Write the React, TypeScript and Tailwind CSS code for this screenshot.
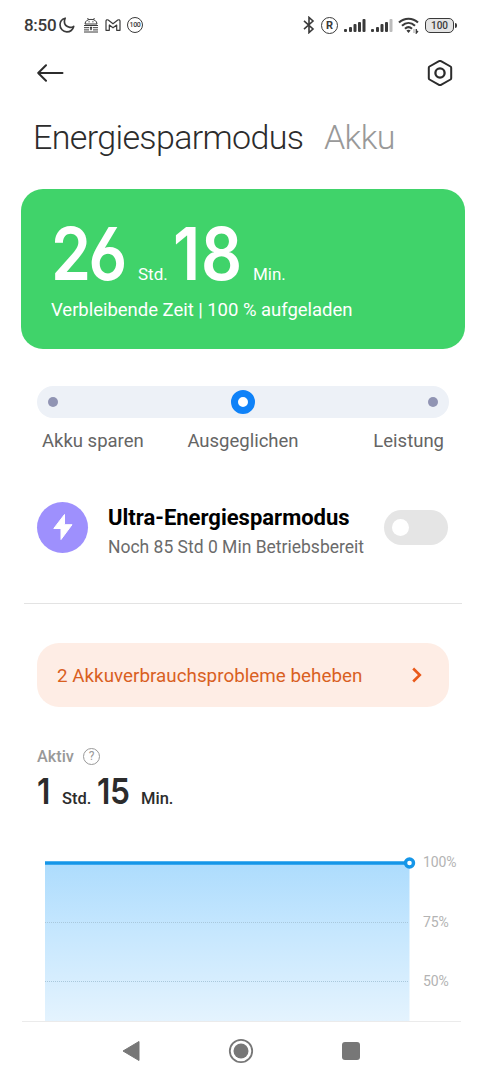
import type { ReactNode } from 'react';

const percentLabels = ['100%', '75%', '50%'];

function StatusBar() {
  return (
    <div className="flex h-[50px] items-center justify-between pl-6 pr-[29px] text-[#3a3a3a]">
      <div className="flex items-center">
        <span className="w-[35px] text-[17px] font-medium leading-5 tracking-[-0.3px]">8:50</span>
        <svg className="h-4 w-4" viewBox="0 0 16 16" fill="none" stroke="currentColor" strokeWidth="1.7" strokeLinejoin="round">
          <path d="M6.200 1.200C3.200 2 1 4.600 1 7.800c0 3.900 3 7 6.800 7 3.200 0 6-2.200 6.900-5.400-1.400.9-2.700 1.200-3.900.9C7.500 9.700 5.400 7.600 5.400 4.800c0-1.300.2-2.500.8-3.600Z" />
        </svg>
        <svg className="ml-2 h-4 w-4" viewBox="0 0 16 16" fill="none" stroke="currentColor" strokeWidth="1">
          <path d="M2 7C2.200 3.800 4.600 2.400 8 2.400S13.800 3.800 14 7ZM4.600 1l1 1.800M11.400 1l-1 1.800M1 8.500h14M1 10.700h5M10 10.700h5M1 12.900h5M10 12.900h5M1 15h14" />
          <path d="M7 10h2v1.200H8.500V13h-1v-1.800H7Z" fill="currentColor" strokeWidth=".4" />
          <path d="M5.500 4.800h1.200M9.300 4.800h1.200" />
        </svg>
        <svg className="ml-[6px] h-4 w-4" viewBox="0 0 16 16" fill="none" stroke="currentColor" strokeWidth="1.2" strokeLinejoin="round">
          <path d="M1 13.300V4.100c0-1.300 1.200-1.700 2.200-1L8 6.800l4.800-3.700c1-.7 2.200-.3 2.200 1v9.200h-3.300V8L8 10.800 4.300 8v5.300Z" />
        </svg>
        <span className="ml-[6px] flex h-4 w-4 items-center justify-center rounded-full border-[1.3px] border-[#3a3a3a] text-[7px] font-medium leading-none tracking-[-0.3px]">
          100
        </span>
      </div>

      <div className="flex items-center">
        <svg className="h-[18px] w-3" viewBox="0 0 12 18" fill="none" stroke="currentColor" strokeWidth="1.6">
          <path d="m1 4.800 9 8.200-4 3.600V1.400L10 5l-9 8.200" />
        </svg>
        <span className="ml-[6px] flex h-[17px] w-[17px] items-center justify-center rounded-full border-[1.600px] border-[#3a3a3a] pt-px text-[11px] font-bold leading-none">
          R
        </span>
        <SignalBars className="ml-[6px]" />
        <SignalBars className="ml-[5px]" weak />
        <svg className="ml-[5px] h-[17px] w-[21px]" viewBox="0 0 21 17" fill="none" stroke="currentColor" strokeWidth="2.100">
          <path d="M1 5.600C6.500.4 14.500.4 20 5.600M4 8.700c3.900-3.600 9.100-3.600 13 0M7 11.700c2.100-2 4.900-2 7 0" />
          <path d="m8.400 13.600 2.100 2.400 2.100-2.400c-1.200-1-3-1-4.200 0Z" fill="currentColor" stroke="none" />
          <path d="M16 12v4" stroke="#b5b5b5" strokeWidth="1.300" />
          <path d="M18.300 12v4l1.700-2" strokeWidth="1.300" />
        </svg>
        <span className="ml-[6px] flex h-[15px] w-[29px] items-center justify-center rounded-[5px] border-[1.500px] border-[#3a3a3a] bg-[#e4e4e4] pt-px text-[10px] font-medium leading-none">
          100
        </span>
        <span className="ml-px h-[5px] w-[2px] rounded-r bg-[#3a3a3a]" />
      </div>
    </div>
  );
}

function SignalBars({ className, weak = false }: { className: string; weak?: boolean }) {
  return (
    <svg className={`h-[15px] w-[22px] ${className}`} viewBox="0 0 22 15" fill="currentColor">
      <rect x="0" y="11" width="3" height="3" rx="1" />
      <rect x="5" y="9" width="3" height="5" rx="1" />
      <rect x="9.500" y="6" width="3" height="8" rx="1" />
      <rect x="14" y="4" width="3" height="10" rx="1" />
      <rect x="18.500" y="1" width="3" height="13" rx="1" fill={weak ? '#bcbcbc' : 'currentColor'} />
    </svg>
  );
}

function Header() {
  return (
    <header className="flex h-[46px] items-center justify-between pl-[37px] pr-[33px] text-[#2c2c2c]">
      <svg className="h-[18px] w-[27px]" viewBox="0 0 27 18" fill="none" stroke="currentColor" strokeWidth="2" strokeLinecap="round" strokeLinejoin="round">
        <path d="M9 1.200 1.200 9 9 16.800M1.200 9H25.500" />
      </svg>
      <svg className="h-[26px] w-[26px]" viewBox="0 0 26 26" fill="none" stroke="currentColor" strokeWidth="2" strokeLinejoin="round">
        <path d="M12 1.200a2 2 0 0 1 2 0l9.500 5.300a1.400 1.400 0 0 1 .7 1.200v10.600a1.400 1.400 0 0 1-.7 1.200L14 24.800a2 2 0 0 1-2 0l-9.500-5.300a1.400 1.400 0 0 1-.7-1.200V7.700a1.400 1.400 0 0 1 .7-1.200Z" />
        <circle cx="13" cy="13" r="4.600" strokeWidth="2.300" />
      </svg>
    </header>
  );
}

function ModeSlider() {
  return (
    <section className="mx-[37px] mt-[37px]">
      <div className="flex h-8 items-center justify-between rounded-full bg-[#edf1f7] px-[11px]">
        <span className="h-[10px] w-[10px] rounded-full bg-[#9094b3]" />
        <span className="h-6 w-6 rounded-full border-[7px] border-[#0f82f8] bg-white" />
        <span className="h-[10px] w-[10px] rounded-full bg-[#9094b3]" />
      </div>
      <div className="mt-[11px] grid grid-cols-3 px-[5px] text-[18.500px] leading-6 text-[#656565]">
        <span>Akku sparen</span>
        <span className="text-center">Ausgeglichen</span>
        <span className="text-right">Leistung</span>
      </div>
    </section>
  );
}

function UltraMode() {
  return (
    <section className="ml-[37px] mr-[38px] mt-[48px] flex h-[52px] items-center">
      <div className="flex h-[51px] w-[51px] shrink-0 items-center justify-center rounded-full bg-[#9e90fd]">
        <svg className="h-[28px] w-[20px]" viewBox="0 0 20 28" fill="#fff" stroke="#fff" strokeWidth="1" strokeLinejoin="round">
          <path d="M11.500 1.500.8 15.500H8v11L19 11.700h-7.500Z" />
        </svg>
      </div>
      <div className="ml-5 w-0 grow whitespace-nowrap pt-[10px]">
        <h2 className="text-[22px] font-bold leading-[30px] text-black">Ultra-Energiesparmodus</h2>
        <p className="text-[17.500px] leading-[28px] text-[#6b6b6b]">Noch 85 Std 0 Min Betriebsbereit</p>
      </div>
      <div className="flex h-[35px] w-16 shrink-0 items-center rounded-full bg-[#e5e5e5] pl-2">
        <span className="h-[17px] w-[17px] rounded-full bg-white" />
      </div>
    </section>
  );
}

// Inter's open digits, condensed a little
function Digits({ className, children }: { className: string; children: ReactNode }) {
  return (
    <span className={`inline-block font-['Inter','Roboto',sans-serif] font-semibold [font-feature-settings:'ss01'] ${className}`}>
      <span className="inline-block origin-left scale-x-[0.88]">{children}</span>
    </span>
  );
}

function BatteryChart() {
  return (
    <section className="ml-[45px] mt-[46px] flex h-[166px] shrink-0 overflow-hidden">
      <svg className="h-[166px] w-[372px] shrink-0" viewBox="0 0 372 166">
        <defs>
          <linearGradient id="level" x1="0" y1="0" x2="0" y2="1">
            <stop offset="0" stopColor="#addcfd" />
            <stop offset=".4" stopColor="#c4e6fe" />
            <stop offset="1" stopColor="#e4f3fe" />
          </linearGradient>
        </defs>
        <rect x="0" y="8" width="364.500" height="158" fill="url(#level)" />
        <path d="M0 67.500H364M0 126.500H364" stroke="#a9c8dc" strokeWidth="1" strokeDasharray="1 1" />
        <path d="M0 8H364" stroke="#1596e8" strokeWidth="3.500" />
        <circle cx="364.500" cy="8" r="4" fill="#fff" stroke="#1596e8" strokeWidth="3.400" />
      </svg>
      <div className="ml-[6px] flex flex-col text-[14px] leading-[15px] tracking-[-0.1px] text-[#b3b3b3]">
        {percentLabels.map((label) => (
          <span key={label} className="h-[59.500px] shrink-0">
            {label}
          </span>
        ))}
      </div>
    </section>
  );
}

function NavBar() {
  return (
    <nav className="h-[59px] shrink-0 text-[#777]">
      <div className="ml-[22px] mr-[25px] h-px bg-[#ebebeb]" />
      <div className="flex h-[58px] items-center justify-between pl-[122px] pr-[126px]">
        <svg className="h-[22px] w-[18px]" viewBox="0 0 18 22" fill="currentColor" stroke="currentColor" strokeLinejoin="round">
          <path d="M1 11 17 1.500v19Z" />
        </svg>
        <svg className="h-[26px] w-[26px]" viewBox="0 0 26 26">
          <circle cx="13" cy="13" r="11.200" fill="none" stroke="currentColor" strokeWidth="1.800" />
          <circle cx="13" cy="13" r="7.500" fill="currentColor" />
        </svg>
        <span className="h-[18px] w-[18px] rounded-[3px] bg-[#777]" />
      </div>
    </nav>
  );
}

export default function App() {
  return (
    <div className="flex h-[1080px] w-[486px] flex-col overflow-hidden bg-white font-['Roboto',sans-serif]">
      <StatusBar />
      <Header />

      <div className="flex h-[93px] items-start whitespace-nowrap pl-[33px] pt-[21px] text-[34px] font-light leading-10 tracking-[-0.640px]">
        <h1 className="w-[291px] text-[#2c2c2c]">Energiesparmodus</h1>
        <span className="text-[#999]">Akku</span>
      </div>

      <section className="mx-[21px] h-40 shrink-0 rounded-[22px] bg-[#40d36a] pl-[30px] pt-[29px] text-white">
        <div className="flex h-[72px] items-baseline">
          <Digits className="w-[87px] text-[73px] leading-[72px] tracking-[-3px]">26</Digits>
          <span className="w-[35px] text-[17px]">Std.</span>
          <Digits className="w-[80px] text-[73px] leading-[72px] tracking-[1px]">18</Digits>
          <span className="text-[17px]">Min.</span>
        </div>
        <p className="mt-2 text-[18.500px] leading-6 tracking-[-0.030px]">Verbleibende Zeit | 100 % aufgeladen</p>
      </section>

      <ModeSlider />
      <UltraMode />

      <div className="mx-6 mt-[50px] h-px shrink-0 bg-[#e3e3e3]" />

      <section className="mx-[37px] mt-[39px] flex h-16 shrink-0 items-center justify-between rounded-[22px] bg-[#feede5] pl-5 pr-[27px] text-[#d9601f]">
        <span className="pt-[3px] text-[18.800px] tracking-[0.030px]">2 Akkuverbrauchsprobleme beheben</span>
        <svg className="h-4 w-[10px]" viewBox="0 0 10 16" fill="none" stroke="#e9591a" strokeWidth="2.600">
          <path d="m1.200 1.500 6.600 6.500-6.600 6.500" />
        </svg>
      </section>

      <section className="ml-[37px] mt-[38px] h-16 shrink-0">
        <div className="flex h-6 items-center text-[16.300px] font-medium text-[#999]">
          <span className="w-[46px]">Aktiv</span>
          <span className="mb-[2px] flex h-[17px] w-[17px] items-center justify-center rounded-full border border-[#999] text-[12px] font-normal leading-none">?</span>
        </div>
        <div className="flex h-10 items-baseline text-[#2c2c2c]">
          <Digits className="w-[25px] text-[36px] leading-[44px]">1</Digits>
          <span className="w-[35px] text-[16.500px] font-medium">Std.</span>
          <Digits className="w-[44px] text-[36px] leading-[44px] tracking-[-0.500px]">15</Digits>
          <span className="text-[16.500px] font-medium">Min.</span>
        </div>
      </section>

      <BatteryChart />
      <NavBar />
    </div>
  );
}
